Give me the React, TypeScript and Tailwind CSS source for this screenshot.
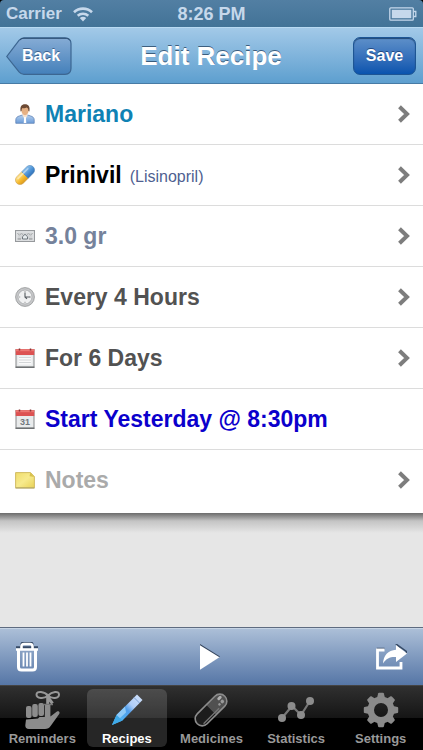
import type { ReactNode } from "react";

const PersonIcon = () => (
  <svg viewBox="0 0 20 20" className="size-5" aria-hidden="true">
    <defs>
      <linearGradient id="shirt" x1="0" y1="0" x2="0" y2="1">
        <stop offset="0" stopColor="#b5d0ee" />
        <stop offset="1" stopColor="#6a9bd8" />
      </linearGradient>
    </defs>
    <path d="M.8 19.300v-3.500c0-2 1.500-3.300 3.500-3.800l3.200-1h5l3.200 1c2 .5 3.500 1.800 3.500 3.800v3.500z" fill="url(#shirt)" stroke="#6284b8" strokeWidth=".8" />
    <path d="M7.300 11l2.700 5 2.700-5-.7-2H8z" fill="#f6e3d0" />
    <path d="M9.200 13h1.600l.5 6H8.700z" fill="#fff" />
    <ellipse cx="10" cy="6.500" rx="3.600" ry="4.700" fill="#e6b184" />
    <path d="M5.600 7.500C4.800 2.500 6.500.3 10 .3s5.200 2.200 4.400 7.200l-1-.4c0-2-.7-3.200-1.700-3.500-1.600.8-3 .7-4.100.4-.7.6-1 1.700-1 3.100z" fill="#6d4a34" />
  </svg>
);

const PillIcon = () => (
  <svg viewBox="0 0 20 20" className="size-5" aria-hidden="true">
    <defs>
      <linearGradient id="pillY" x1="0" y1="0" x2="0" y2="1">
        <stop offset="0" stopColor="#ffe48a" />
        <stop offset=".6" stopColor="#f5b82c" />
        <stop offset="1" stopColor="#d99a20" />
      </linearGradient>
      <linearGradient id="pillB" x1="0" y1="0" x2="0" y2="1">
        <stop offset="0" stopColor="#8cc2ee" />
        <stop offset=".6" stopColor="#4a90d4" />
        <stop offset="1" stopColor="#3272b8" />
      </linearGradient>
    </defs>
    <g transform="rotate(-45 10 10)">
      <path d="M10 5.400H3a4.600 4.600 0 0 0 0 9.200H10z" fill="url(#pillY)" stroke="#c59540" strokeWidth=".5" />
      <path d="M10 5.400h7a4.600 4.600 0 0 1 0 9.200H10z" fill="url(#pillB)" stroke="#4279b0" strokeWidth=".5" />
      <path d="M2.500 7.600h14" stroke="#fff" strokeOpacity=".45" strokeWidth="1.500" strokeLinecap="round" />
    </g>
  </svg>
);

const DoseIcon = () => (
  <svg viewBox="0 0 20 20" className="size-5" aria-hidden="true">
    <rect x=".5" y="4.500" width="19" height="11" fill="#d2d4d6" stroke="#96999c" />
    <rect x="2" y="6" width="16" height="8" fill="none" stroke="#eceeef" strokeWidth=".8" />
    <path d="M2.500 7.500l2 1.500 2-1.500 2 1.500M17.500 7.500l-2 1.500-2-1.500-2 1.500" fill="none" stroke="#8a8d90" strokeWidth=".9" strokeDasharray="1.500 1" />
    <path d="M7.500 13v-2.300L10 8.300l2.500 2.400V13z" fill="#e8edf0" stroke="#6f767c" />
    <path d="M2.500 13h3.500M14 13h3.500" stroke="#8a8d90" />
  </svg>
);

const ClockIcon = () => (
  <svg viewBox="0 0 20 20" className="size-5" aria-hidden="true">
    <circle cx="10" cy="10" r="9.400" fill="#c6c7c9" stroke="#929496" strokeWidth=".8" />
    <circle cx="10" cy="10" r="7" fill="#f0f1f2" stroke="#a8abad" strokeWidth=".8" />
    <path d="M10 4.200v1M10 14.800v1M4.200 10h1M14.800 10h1" stroke="#888" />
    <path d="M10 5.500V10h5M10 10l2 1.800" fill="none" stroke="#565b60" strokeWidth="1.100" />
  </svg>
);

const CalendarIcon = ({ dated = false }: { dated?: boolean }) => (
  <svg viewBox="0 0 20 20" className="size-5" aria-hidden="true">
    <rect x="1" y="1.500" width="18" height="17.500" fill="#e9ebec" stroke="#85888a" />
    <path d="M.7 1.200h18.600V7H.7z" fill="#dc5252" />
    <path d="M.7 1.200h18.600v2H.7z" fill="#ec7773" />
    <path d="M.5 19.300h19" stroke="#65686a" strokeWidth="1.200" />
    <path d="M4.500 .5v2M15.500 .5v2" stroke="#873434" strokeWidth="1.500" />
    {dated ? (
      <text x="10" y="16" textAnchor="middle" fontSize="9" fontWeight="700" fill="#72787c" fontFamily="Liberation Sans, sans-serif">31</text>
    ) : (
      <>
        <rect x="3.500" y="8.500" width="13" height="8" fill="#fafafa" />
        <path d="M4 9.500h12M4 12h12M4 14.500h12" stroke="#d3d6d8" />
      </>
    )}
  </svg>
);

const NoteIcon = () => (
  <svg viewBox="0 0 20 20" className="size-5" aria-hidden="true">
    <defs>
      <linearGradient id="paper" x1="0" y1="0" x2="1" y2="1">
        <stop offset="0" stopColor="#f0dd6c" />
        <stop offset=".5" stopColor="#f7ea8d" />
        <stop offset="1" stopColor="#e8d256" />
      </linearGradient>
    </defs>
    <path d="M.6 2.600h14.900l3.900 4v11.200H.6z" fill="url(#paper)" stroke="#cdb658" strokeWidth=".9" />
    <path d="M15.200 2.600l4.200 4.300-4.900-.6z" fill="#d8c14c" />
    <path d="M.5 18h19" stroke="#aba063" />
  </svg>
);

const Chevron = () => (
  <svg viewBox="0 0 12 18" className="ml-auto h-[18px] w-3 shrink-0" aria-hidden="true">
    <path d="M1.500 1.800L9 9l-7.500 7.200" fill="none" stroke="#7d7d7d" strokeWidth="4" />
  </svg>
);

type Row = { icon: ReactNode; text: string; note?: string; color: string; arrow: boolean };

const rows: Row[] = [
  { icon: <PersonIcon />, text: "Mariano", color: "text-[#0f82b4]", arrow: true },
  { icon: <PillIcon />, text: "Prinivil", note: "(Lisinopril)", color: "text-black", arrow: true },
  { icon: <DoseIcon />, text: "3.0 gr", color: "text-[#75829b]", arrow: true },
  { icon: <ClockIcon />, text: "Every 4 Hours", color: "text-[#525252]", arrow: true },
  { icon: <CalendarIcon />, text: "For 6 Days", color: "text-[#525252]", arrow: true },
  { icon: <CalendarIcon dated />, text: "Start Yesterday @ 8:30pm", color: "text-[#0b00cc]", arrow: false },
  { icon: <NoteIcon />, text: "Notes", color: "text-[#aaaaaa]", arrow: true },
];

const RemindersIcon = () => (
  <svg viewBox="0 0 36 40" className="h-10 w-9" aria-hidden="true">
    <g fill="#8c8c8c">
      <rect x="2" y="17" width="5.600" height="12" rx="2" />
      <rect x="8.200" y="15" width="5.600" height="13" rx="2" />
      <rect x="14.400" y="14" width="5.600" height="13" rx="2" />
      <path d="M20.800 16h5.600v11.500l6.200-4.800c2-1.300 3.800.3 2.600 2.200L27 36.500c-1.800 2.700-3.300 3.500-6 3.500H5c-3 0-4-2-3.600-4.500L2 30.500l12-1 1.500-1.500h5.300z" />
    </g>
    <path d="M24 6.500C20.500 2.500 12.500 1.500 12.500 5.500s7.500 5 11.500 1c4-4 11-5 11-1s-7 5-11 1z" fill="none" stroke="#989898" strokeWidth="2" />
    <path d="M23.700 7v10M23.700 8l4.800 6.500" fill="none" stroke="#989898" strokeWidth="3" />
    <path d="M20 15.500h9" stroke="#777" strokeWidth="1.500" />
  </svg>
);

const PencilIcon = () => (
  <svg viewBox="0 0 36 40" className="h-10 w-9" aria-hidden="true">
    <defs>
      <linearGradient id="pencil" x1="1" y1="0" x2="0" y2="1">
        <stop offset="0" stopColor="#d3e2fb" />
        <stop offset=".35" stopColor="#b0cef8" />
        <stop offset=".5" stopColor="#4f9deb" />
        <stop offset="1" stopColor="#55c6fb" />
      </linearGradient>
    </defs>
    <path d="M28 5.500L33.500 11 13.500 31.500 3 36 7.500 26z" fill="url(#pencil)" />
    <path d="M7.500 26l8.500-8.500 1 6-6.500 6z" fill="#8fcaf8" />
    <path d="M7.500 26l6 5.500L3 36z" fill="#3fa9e8" />
    <path d="M25 8.500l5.500 5.500" stroke="#7a9ed2" strokeWidth="1" />
  </svg>
);

const CapsuleIcon = () => (
  <svg viewBox="0 0 36 40" className="h-10 w-9" aria-hidden="true">
    <g transform="rotate(-45 18 21)">
      <path d="M18 14h12a7 7 0 0 1 0 14H18z" fill="#505050" />
      <path d="M18 14H6a7 7 0 0 0 0 14h12z" fill="#1c1c1c" />
      <rect x="-1.500" y="14" width="39" height="14" rx="7" fill="none" stroke="#8c8c8c" strokeWidth="1.600" />
      <path d="M3 25.500h22" stroke="#777" strokeWidth="1.200" />
      <rect x="30" y="17" width="5" height="3" rx="1.500" fill="#b0b0b0" />
      <circle cx="32" cy="23" r="1.800" fill="#999" />
      <circle cx="28" cy="23" r="1.300" fill="#999" />
    </g>
  </svg>
);

const StatsIcon = () => (
  <svg viewBox="0 0 36 40" className="h-10 w-9" aria-hidden="true">
    <path d="M4 29l10-12 9 9L32 12" fill="none" stroke="#777" strokeWidth="2.200" />
    <g fill="#8c8c8c">
      <circle cx="4" cy="29" r="4" />
      <circle cx="13.500" cy="17" r="4" />
      <circle cx="23" cy="26" r="4" />
      <circle cx="32" cy="12" r="4" />
    </g>
  </svg>
);

const GearIcon = () => (
  <svg viewBox="0 0 36 40" className="h-10 w-9" aria-hidden="true">
    <g fill="#8a8a8a" transform="translate(18 21)">
      <path fillRule="evenodd" d="M0-13.500a13.500 13.500 0 0 1 0 27 13.500 13.500 0 0 1 0-27zM0-7A7 7 0 0 0 0 7 7 7 0 0 0 0-7z" />
      {[0, 45, 90, 135, 180, 225, 270, 315].map((angle) => (
        <path key={angle} transform={`rotate(${angle})`} d="M-4-12L-2.900-16.500q.2-.7 1-.7h3.800q.8 0 1 .7L4-12z" />
      ))}
    </g>
  </svg>
);

const tabs = [
  { label: "Reminders", icon: <RemindersIcon />, active: false },
  { label: "Recipes", icon: <PencilIcon />, active: true },
  { label: "Medicines", icon: <CapsuleIcon />, active: false },
  { label: "Statistics", icon: <StatsIcon />, active: false },
  { label: "Settings", icon: <GearIcon />, active: false },
];

export default function App() {
  return (
    <div className="flex min-h-screen flex-col bg-[#e6e6e6] font-['Liberation_Sans',Arial,sans-serif] font-bold">
      <div className="bg-black">
        <div className="grid h-[27px] grid-cols-3 items-center rounded-t-sm bg-linear-to-b from-[#527fa3] to-[#427397] px-1.5 text-[#c6d8eb]">
          <div className="flex items-center gap-2.5 text-[17px] leading-6">
            Carrier
            <svg viewBox="0 0 22 16" className="h-4 w-[22px]" aria-label="Wi-Fi" role="img">
              <path d="M2 6.200a13 13 0 0 1 18 0M5.700 9.800a8 8 0 0 1 10.600 0" fill="none" stroke="currentColor" strokeWidth="2.600" />
              <path d="M7.800 12.100a5 5 0 0 1 6.400 0L11 15.500z" fill="currentColor" />
            </svg>
          </div>
          <div className="text-center text-lg leading-6">8:26 PM</div>
          <svg viewBox="0 0 28 14" className="h-3.5 w-7 justify-self-end" aria-label="Battery full" role="img">
            <rect x=".8" y=".8" width="23.500" height="12.400" rx="1" fill="none" stroke="currentColor" strokeWidth="1.300" />
            <rect x="2.800" y="2.800" width="19.500" height="8.400" fill="currentColor" />
            <path d="M24.500 4.500h2.300v5h-2.300" fill="none" stroke="currentColor" strokeWidth="1.300" />
          </svg>
        </div>
      </div>
      <header className="grid h-[57px] grid-cols-[1fr_auto_1fr] items-center border-t border-b border-t-[#b8daf2] border-b-[#477ba5] bg-linear-to-b from-[#a2c9e8] to-[#5d9fcf] pr-[7px] pl-1.5 text-white">
        <button className="relative h-[38px] w-[66px] pl-1 text-base [text-shadow:0_-1px_0_rgba(30,60,100,0.6)]">
          <svg viewBox="0 0 66 38" className="absolute inset-0 h-full w-full" aria-hidden="true">
            <defs>
              <linearGradient id="back" x1="0" y1="0" x2="0" y2="1">
                <stop offset="0" stopColor="#86acd5" />
                <stop offset="1" stopColor="#4480ba" />
              </linearGradient>
            </defs>
            <path d="M18 .8h41c4 0 6 2 6 6v24.500c0 4-2 6-6 6H18c-2 0-3.500-.8-5-2.500L.8 19.500 13 3.300C14.500 1.600 16 .8 18 .8z" fill="url(#back)" stroke="#3c6691" strokeWidth="1.200" />
            <path d="M14 3c1.500-1.500 2.500-1.700 4-1.700h41c2.500 0 4 .7 5 2.200" fill="none" stroke="#2f5075" strokeWidth="1" />
          </svg>
          <span className="relative">Back</span>
        </button>
        <h1 className="text-[26px] leading-8 [text-shadow:0_-1px_0_rgba(40,70,100,0.8)]">Edit Recipe</h1>
        <button className="h-[38px] w-[63px] justify-self-end rounded-[7px] border border-[#1d5594] bg-linear-to-b from-[#5e90c9] to-[#0854ae] text-base shadow-[inset_0_1px_1px_#204775] [text-shadow:0_-1px_0_rgba(20,50,100,0.7)]">
          Save
        </button>
      </header>

      <main className="flex-1">
        <ul className="bg-white pb-0.5">
          {rows.map((row) => (
            <li key={row.text} className="border-b border-[#dcdcdc] last:border-transparent">
              <button className="flex h-[60px] w-full items-center pr-[13px] pl-[15px] text-left">
                <span className="mr-2.5 shrink-0">{row.icon}</span>
                <span className={`text-[23px] leading-7 ${row.color}`}>{row.text}</span>
                {row.note && <span className="ml-2 pt-1 text-base font-normal text-[#4f5f91]">{row.note}</span>}
                {row.arrow && <Chevron />}
              </button>
            </li>
          ))}
        </ul>
        <div className="h-5 bg-linear-to-b from-[#6c6c6c] via-[#c4c4c4] via-40% to-[#e6e6e6]" />
      </main>

      <div className="flex h-[58px] items-center justify-between border-t border-t-[#5e6b80] bg-linear-to-b from-[#adc0d8] to-[#5676a6] px-4 text-white shadow-[inset_0_1px_0_#c5d3e4]">
        <button aria-label="Delete">
          <svg viewBox="0 0 22 30" className="h-[30px] w-[22px]" aria-hidden="true">
            <path d="M0 6.500h22M5.500 6.500V4q0-2.500 2.500-2.500h6q2.500 0 2.500 2.500v2.500" transform="translate(0 -1)" fill="none" stroke="#364a66" strokeWidth="2.400" />
            <path d="M0 7.500h22M5.500 7V4.500Q5.500 2 8 2h6q2.500 0 2.500 2.500V7" fill="none" stroke="#fff" strokeWidth="2.600" />
            <path d="M2.500 7v18q0 3 3 3h11q3 0 3-3V7" fill="none" stroke="#fff" strokeWidth="3" />
            <path d="M7.500 10.500v14M11 10.500v14M14.500 10.500v14" stroke="#fff" strokeWidth="1.800" />
          </svg>
        </button>
        <button aria-label="Play">
          <svg viewBox="0 0 20 26" className="ml-1.5 h-[26px] w-5" aria-hidden="true">
            <path d="M0 0l20 12.500L0 25z" fill="#33435a" />
            <path d="M0 1.200l19.500 12L0 25.800z" fill="#fff" />
          </svg>
        </button>
        <button aria-label="Share">
          <svg viewBox="0 0 31 26" className="h-[26px] w-[31px]" aria-hidden="true">
            <path d="M8.500 4.500h-7v2M20 0l11 8-3 2z" fill="none" stroke="#364a66" strokeWidth="1.500" />
            <path d="M8.500 6H1.500v18h23.500v-6" fill="none" stroke="#fff" strokeWidth="2.800" />
            <path d="M20 1l11 8.500L20 18v-5c-6-.3-9.500 1.200-13 6.500C7.500 11.500 12 6.200 20 5.700z" fill="#fff" />
          </svg>
        </button>
      </div>

      <nav className="grid h-[65px] grid-cols-5 border-t border-t-[#444] bg-[linear-gradient(#303030_0,#151515_50%,#000_50%,#000_100%)] py-[3px]">
        {tabs.map((tab) => (
          <button
            key={tab.label}
            className={`mx-0.5 flex min-w-0 flex-col items-center rounded-md text-[13px] leading-4 ${tab.active ? "bg-white/15 text-white" : "text-[#999999]"}`}
          >
            {tab.icon}
            <span className="pt-0.5">{tab.label}</span>
          </button>
        ))}
      </nav>
    </div>
  );
}
